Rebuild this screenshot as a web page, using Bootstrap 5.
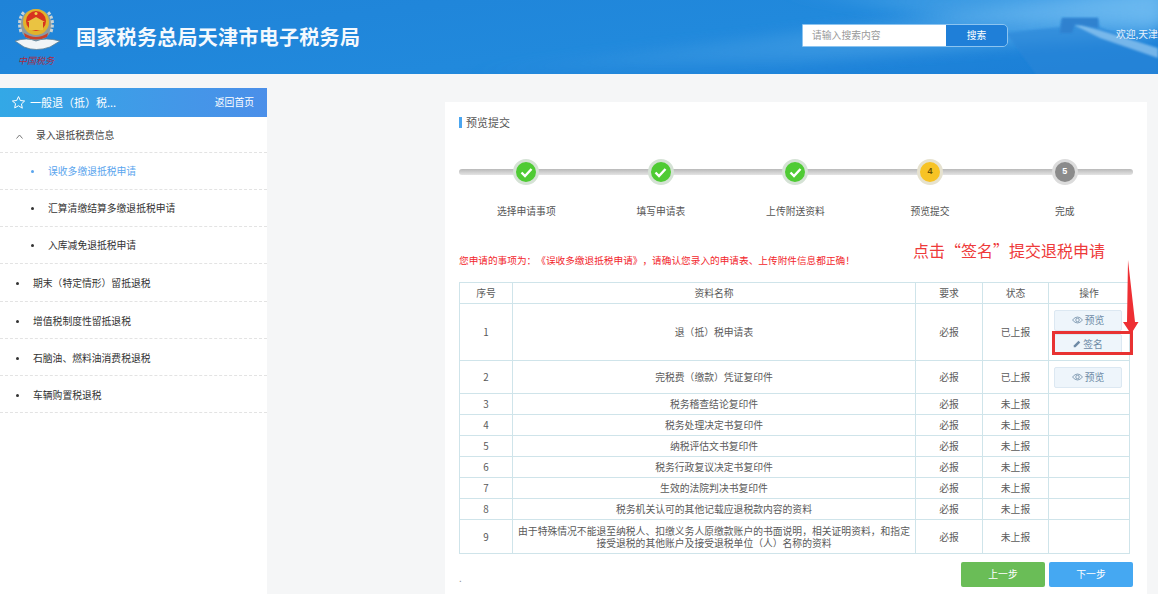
<!DOCTYPE html>
<html lang="zh"><head><meta charset="utf-8"><title>预览提交</title>
<link href="https://cdn.jsdelivr.net/npm/bootstrap@5.3.0/dist/css/bootstrap.min.css" rel="stylesheet">
<style>
html,body{height:594px;overflow:hidden}
body{background:#f5f6f7;font-family:"Noto Sans CJK SC","Liberation Sans",sans-serif;font-size:9.8px;color:#444;text-spacing-trim:space-all}
.top-bar{height:74px;position:relative;overflow:hidden;color:#fff;background:linear-gradient(172deg,#1f83d8 0%,#2189dc 55%,#1b7ed6 100%)}
.top-glow{position:absolute;inset:0;width:100%;height:100%}
.top-inner{position:relative;height:74px}
.logo-box{width:76px;height:74px;flex:none}
.site-name{font-size:20px;font-weight:700;letter-spacing:.3px;width:726px;color:#f4f9fe;flex:none;white-space:nowrap}
.search-box{width:206px;height:23px;margin-top:-3px;border:1px solid #8cc4f0;border-radius:0 5px 5px 0;flex:none}
.search-field{width:143px;background:#fff;color:#999;padding-left:9px;line-height:21px;flex:none}
.search-go{flex:1;background:#1f7fd8;color:#fff;line-height:21px;text-align:center;border-radius:0 4px 4px 0}
.welcome{margin-left:108px;margin-top:-5px;white-space:nowrap;flex:none;color:#e6f2fc}
.page-body{height:520px}
.side-panel{width:267px;margin-top:14px;background:#fff;flex:none}
.side-head{height:29px;background:linear-gradient(90deg,#33a8e6,#4b8fe9);color:#fff;padding:0 13px 0 11px;font-size:11px}
.side-back{font-size:9.8px}
.side-item{height:37px;border-bottom:1px dashed #e3e3e3;color:#333;padding-left:16px}
.side-item.first-item{height:36px;color:#444;padding-top:1px}
.side-item.lift-first{height:38px}
.side-item.low-text{padding-top:2px}
.side-sub{padding-left:31px}
.side-on{color:#5aa5ee}
.dotmark{width:3px;height:3px;border-radius:50%;background:currentColor;margin-right:14px;flex:none}
.caret-mark{width:20px;flex:none;color:#777;margin-right:0}
.work-card{width:702px;height:492px;margin:28px 0 0 178px;background:#fff;padding:0 14px;flex:none;position:relative}
.work-title{height:11px;margin-top:15px;font-size:11px;color:#555;line-height:11px;border-left:3px solid #4ba6f0;padding-left:4px}
.step-track{position:relative;height:30px;margin-top:29px;width:674px}
.step-line{position:absolute;left:0;right:0;top:12px;height:6px;border-radius:3px;background:linear-gradient(#b9b9b9,#e4e4e4)}
.step-row{position:relative;display:grid;grid-template-columns:repeat(5,134.6px);height:30px}
.step-cell{display:flex;justify-content:center}
.step-dot{width:26px;height:26px;margin-top:2px;border-radius:50%;border:3px solid #d5e2d5;background:#4fcb34;color:#fff;display:flex;align-items:center;justify-content:center;font-size:9px;font-weight:700;font-family:"Liberation Sans",sans-serif}
.step-dot.now{background:#f7c325;border-color:#e6e2cf;color:#6b5200}
.step-dot.todo{background:#8b8b8b;border-color:#dcdcdc}
.step-names{display:grid;grid-template-columns:repeat(5,134.6px);width:674px;margin-top:18px;color:#555;text-align:center;line-height:12px}
.notice-row{margin-top:21px;height:44px;position:relative}
.notice-red{color:#f2262c;position:absolute;left:0;top:16px;line-height:12px;font-size:9.66px;white-space:nowrap}
.hint-red{color:#ee3a3a;font-size:16px;position:absolute;left:454px;top:0;line-height:24px;white-space:nowrap}
.doc-table{width:670px;table-layout:fixed;margin:0;font-size:9.8px;--bs-table-color:#5a5a5a;--bs-table-border-color:#cfe4ea}
.doc-table td{padding:0 2px;text-align:center;vertical-align:middle;line-height:12px;font-weight:400;border:1px solid #cfe4ea}
.w53{width:53px}.w403{width:403px}.w67{width:67px}.w66{width:66px}.w81{width:81px}
.h21{height:21px}.h57{height:57px}.h33{height:33px}.h34{height:34px}
.doc-btn{display:flex;align-items:center;justify-content:center;gap:2px;width:68px;height:21px;margin:0 0 0 3px;background:#eef5fb;border:1px solid #dce8f2;border-radius:2px;color:#6d8aa6;font-size:9.8px;padding:0}
.doc-btn+.doc-btn{margin-top:3px}
.foot-row{margin-top:8px;width:674px;position:relative}
.stage-btn{width:84px;height:25px;color:#fff;border:0;border-radius:2px;font-size:9.8px;padding:0}
.stage-back{background:#6abd57}.stage-next{background:#45a8f2}
.foot-dot{position:absolute;left:0;top:9px;color:#888}
.mark-box{position:absolute;left:607px;top:229px;width:81px;height:24px;border:3px solid #e83232}
.mark-arrow{position:absolute;left:674px;top:158px;width:20px;height:76px}
</style></head>
<body>
<header class="top-bar">
<svg class="top-glow" viewBox="0 0 1158 74" preserveAspectRatio="none" aria-hidden="true">
<defs><linearGradient id="gl" x1="0" x2="1" y1="0" y2="0"><stop offset="0" stop-color="#7cc4f5" stop-opacity="0"/><stop offset="1" stop-color="#7cc4f5" stop-opacity=".85"/></linearGradient><filter id="bl"><feGaussianBlur stdDeviation="7"/></filter><filter id="bs"><feGaussianBlur stdDeviation="1"/></filter></defs>
<polygon points="440,74 1158,-10 1158,36 1000,46 800,62" fill="url(#gl)" opacity=".55" filter="url(#bl)"/>
<polygon points="760,-10 1170,-10 1170,26 960,22" fill="url(#gl)" opacity=".8" filter="url(#bl)"/>
<path d="M1006 33L1040 29L1060 27L1062 18H1098L1100 27L1158 50V80H1040Z" fill="#2a86d8" opacity=".6" filter="url(#bs)"/>
<path d="M1074 25L1082 25L1158 48V58L1100 38Z" fill="#a9d6f6" opacity=".6" filter="url(#bs)"/>
<path d="M1062 18H1098V28L1075 24L1072 33H1060Z" fill="#2f7fcd" opacity=".85" filter="url(#bs)"/>
</svg>
<div class="top-inner d-flex align-items-center">
<div class="logo-box">
<svg width="76" height="74" viewBox="0 0 76 74">
<ellipse cx="36" cy="25" rx="16" ry="16" fill="#8b9aa0"/>
<path d="M21 32Q17 20 24 12M51 32Q55 20 48 12" stroke="#c9d3d6" stroke-width="3" fill="none" stroke-dasharray="3 1.500"/>
<circle cx="36" cy="22" r="13" fill="#e2b32b"/>
<circle cx="36" cy="21" r="10" fill="#d7331f"/>
<rect x="29" y="22" width="14" height="8" fill="#eac342"/>
<path d="M27 22L36 17L45 22Z" fill="#eac342"/>
<circle cx="36" cy="13.500" r="1.500" fill="#f3d34a"/>
<path d="M24 33Q36 41 48 33L47 37Q36 42 25 37Z" fill="#c9402a"/>
<path d="M15 41Q27 37 36 41Q45 37 60 41L50 47Q36 52 24 47Z" fill="#f1f5f7" stroke="#5c7f94" stroke-width=".8"/>
<text x="36" y="64" text-anchor="middle" font-size="9" font-family="'Liberation Serif','Noto Sans CJK SC',serif" font-style="italic" fill="#a92a40">中国税务</text>
</svg>
</div>
<div class="site-name">国家税务总局天津市电子税务局</div>
<div class="search-box d-flex overflow-hidden"><div class="search-field">请输入搜索内容</div><div class="search-go">搜索</div></div>
<div class="welcome">欢迎,天津</div>
</div>
</header>
<div class="page-body d-flex">
<aside class="side-panel">
<div class="side-head d-flex align-items-center justify-content-between">
<span class="d-flex align-items-center gap-1"><svg width="15" height="15" viewBox="0 0 24 24" fill="none" stroke="#fff" stroke-width="1.600"><path d="M12 2.500l2.900 6.300 6.900.8-5.100 4.700 1.400 6.800L12 17.200l-6.100 3.400 1.400-6.800L2.200 9.600l6.900-.8z"/></svg>一般退（抵）税...</span>
<span class="side-back">返回首页</span></div>
<div class="side-item first-item d-flex align-items-center"><span class="caret-mark"><svg width="7" height="5" viewBox="0 0 7 5" fill="none" stroke="#777"><path d="M.5 4.500L3.500 1L6.500 4.500"/></svg></span>录入退抵税费信息</div>
<div class="side-item side-sub side-on d-flex align-items-center"><i class="dotmark"></i>误收多缴退抵税申请</div>
<div class="side-item side-sub d-flex align-items-center"><i class="dotmark"></i>汇算清缴结算多缴退抵税申请</div>
<div class="side-item side-sub d-flex align-items-center"><i class="dotmark"></i>入库减免退抵税申请</div>
<div class="side-item lift-first low-text d-flex align-items-center"><i class="dotmark"></i>期末（特定情形）留抵退税</div>
<div class="side-item low-text d-flex align-items-center"><i class="dotmark"></i>增值税制度性留抵退税</div>
<div class="side-item low-text d-flex align-items-center"><i class="dotmark"></i>石脑油、燃料油消费税退税</div>
<div class="side-item low-text d-flex align-items-center"><i class="dotmark"></i>车辆购置税退税</div>
</aside>
<main class="work-card">
<div class="work-title">预览提交</div>
<div class="step-track"><div class="step-line"></div>
<div class="step-row">
<div class="step-cell"><span class="step-dot"><svg width="13" height="11" viewBox="0 0 13 11" fill="none" stroke="#fff" stroke-width="2.400"><path d="M1.500 5.500L5 9L11.500 2"/></svg></span></div>
<div class="step-cell"><span class="step-dot"><svg width="13" height="11" viewBox="0 0 13 11" fill="none" stroke="#fff" stroke-width="2.400"><path d="M1.500 5.500L5 9L11.500 2"/></svg></span></div>
<div class="step-cell"><span class="step-dot"><svg width="13" height="11" viewBox="0 0 13 11" fill="none" stroke="#fff" stroke-width="2.400"><path d="M1.500 5.500L5 9L11.500 2"/></svg></span></div>
<div class="step-cell"><span class="step-dot now">4</span></div>
<div class="step-cell"><span class="step-dot todo">5</span></div>
</div></div>
<div class="step-names"><span>选择申请事项</span><span>填写申请表</span><span>上传附送资料</span><span>预览提交</span><span>完成</span></div>
<div class="notice-row"><div class="notice-red">您申请的事项为：《误收多缴退抵税申请》，请确认您录入的申请表、上传附件信息都正确！</div><div class="hint-red">点击“签名”提交退税申请</div></div>
<table class="table table-bordered doc-table">
<colgroup><col class="w53"><col class="w403"><col class="w67"><col class="w66"><col class="w81"></colgroup>
<tbody>
<tr class="h21"><td>序号</td><td>资料名称</td><td>要求</td><td>状态</td><td>操作</td></tr>
<tr class="h57"><td>1</td><td>退（抵）税申请表</td><td>必报</td><td>已上报</td><td>
<button class="btn doc-btn"><svg width="11" height="8" viewBox="0 0 22 16" fill="none" stroke="#6d8aa6" stroke-width="1.600"><path d="M1 8Q11 -4 21 8Q11 20 1 8Z"/><circle cx="11" cy="8" r="3.500"/></svg>预览</button>
<button class="btn doc-btn"><svg width="8" height="8" viewBox="0 0 16 16" fill="#6d8aa6"><path d="M11 1.500l3.500 3.500L5 14.500H1.500V11z"/></svg>签名</button></td></tr>
<tr class="h33"><td>2</td><td>完税费（缴款）凭证复印件</td><td>必报</td><td>已上报</td><td><button class="btn doc-btn"><svg width="11" height="8" viewBox="0 0 22 16" fill="none" stroke="#6d8aa6" stroke-width="1.600"><path d="M1 8Q11 -4 21 8Q11 20 1 8Z"/><circle cx="11" cy="8" r="3.500"/></svg>预览</button></td></tr>
<tr class="h21"><td>3</td><td>税务稽查结论复印件</td><td>必报</td><td>未上报</td><td></td></tr>
<tr class="h21"><td>4</td><td>税务处理决定书复印件</td><td>必报</td><td>未上报</td><td></td></tr>
<tr class="h21"><td>5</td><td>纳税评估文书复印件</td><td>必报</td><td>未上报</td><td></td></tr>
<tr class="h21"><td>6</td><td>税务行政复议决定书复印件</td><td>必报</td><td>未上报</td><td></td></tr>
<tr class="h21"><td>7</td><td>生效的法院判决书复印件</td><td>必报</td><td>未上报</td><td></td></tr>
<tr class="h21"><td>8</td><td>税务机关认可的其他记载应退税款内容的资料</td><td>必报</td><td>未上报</td><td></td></tr>
<tr class="h34"><td>9</td><td>由于特殊情况不能退至纳税人、扣缴义务人原缴款账户的书面说明，相关证明资料，和指定接受退税的其他账户及接受退税单位（人）名称的资料</td><td>必报</td><td>未上报</td><td></td></tr>
</tbody></table>
<div class="foot-row d-flex justify-content-end gap-1"><span class="foot-dot">.</span><button class="btn stage-btn stage-back">上一步</button><button class="btn stage-btn stage-next">下一步</button></div>
<div class="mark-box"></div>
<svg class="mark-arrow" viewBox="0 0 20 76"><path d="M9 0L16 62H19.500L12 74L4 62H8Z" fill="#ee2f33"/></svg>
</main>
</div>
<script src="https://cdn.jsdelivr.net/npm/bootstrap@5.3.0/dist/js/bootstrap.bundle.min.js"></script>
</body></html>
